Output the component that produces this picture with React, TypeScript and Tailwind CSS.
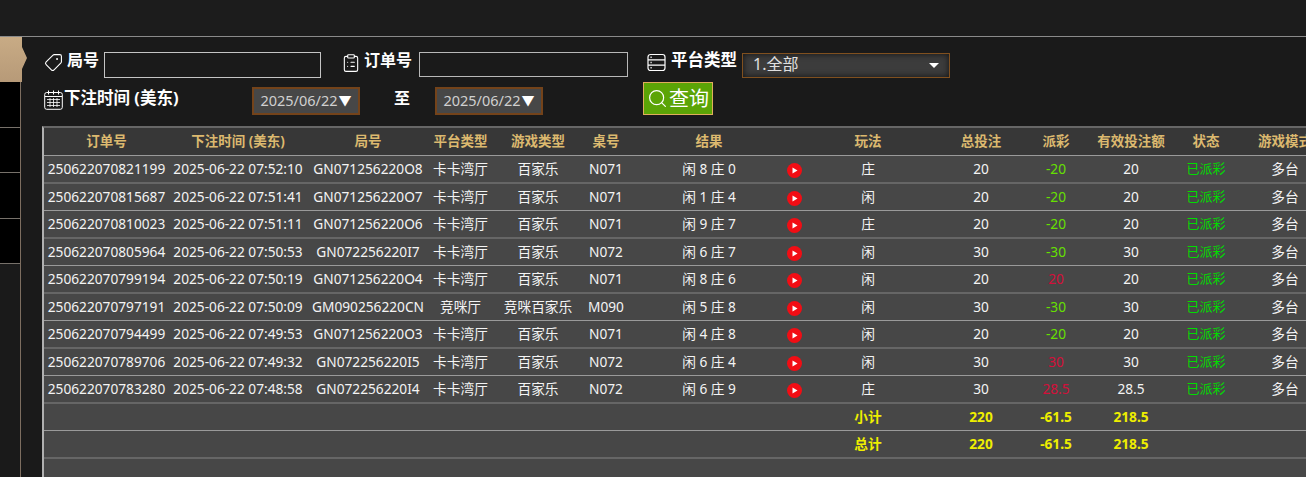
import { ClipboardList, Search, Tag } from "lucide-react";

const FONT = "font-['Noto_Sans','Noto_Sans_CJK_SC',sans-serif]";

const rows = [
  ["250622070821199", "2025-06-22 07:52:10", "GN071256220O8", "卡卡湾厅", "百家乐", "N071", "闲 8 庄 0", "庄", "20", "-20", "20"],
  ["250622070815687", "2025-06-22 07:51:41", "GN071256220O7", "卡卡湾厅", "百家乐", "N071", "闲 1 庄 4", "闲", "20", "-20", "20"],
  ["250622070810023", "2025-06-22 07:51:11", "GN071256220O6", "卡卡湾厅", "百家乐", "N071", "闲 9 庄 7", "庄", "20", "-20", "20"],
  ["250622070805964", "2025-06-22 07:50:53", "GN072256220I7", "卡卡湾厅", "百家乐", "N072", "闲 6 庄 7", "闲", "30", "-30", "30"],
  ["250622070799194", "2025-06-22 07:50:19", "GN071256220O4", "卡卡湾厅", "百家乐", "N071", "闲 8 庄 6", "闲", "20", "20", "20"],
  ["250622070797191", "2025-06-22 07:50:09", "GM090256220CN", "竞咪厅", "竞咪百家乐", "M090", "闲 5 庄 8", "闲", "30", "-30", "30"],
  ["250622070794499", "2025-06-22 07:49:53", "GN071256220O3", "卡卡湾厅", "百家乐", "N071", "闲 4 庄 8", "闲", "20", "-20", "20"],
  ["250622070789706", "2025-06-22 07:49:32", "GN072256220I5", "卡卡湾厅", "百家乐", "N072", "闲 6 庄 4", "闲", "30", "30", "30"],
  ["250622070783280", "2025-06-22 07:48:58", "GN072256220I4", "卡卡湾厅", "百家乐", "N072", "闲 6 庄 9", "庄", "30", "28.5", "28.5"],
];

const headers = ["订单号", "下注时间 (美东)", "局号", "平台类型", "游戏类型", "桌号", "结果", "", "玩法", "总投注", "派彩", "有效投注额", "状态", "游戏模式"];
const widths = [125, 138, 122, 63, 92, 44, 132, 68, 80, 111, 74, 76, 74, 84];

// row lines in the shot alternate: thin light, then thick dim
const lineThin = "border-b border-b-[#9a9a9a]";
const lineThick = "border-b-2 border-b-[#666666]";

function PlayIcon() {
  return (
    <svg width="15" height="15" viewBox="0 0 15 15" className="mx-auto mt-[3px] block">
      <circle cx="7.5" cy="7.5" r="7.5" fill="#f20d14" />
      <path d="M5.5 4.5 L10.5 7.5 L5.5 10.5 Z" fill="#ffffff" />
    </svg>
  );
}

function ServerIcon() {
  return (
    <svg width="19" height="19" viewBox="0 0 19 19" fill="none" stroke="white" strokeWidth="1.2" className="ml-[19px] mt-[1px] shrink-0">
      <rect x="1" y="1.5" width="17" height="16" rx="2.5" />
      <path d="M1 6.8H18M1 12.2H18" />
      <path d="M3.5 4.2H4.7M3.5 9.5H4.7M3.5 14.8H4.7" strokeWidth="1.4" />
    </svg>
  );
}

function CalendarIcon() {
  return (
    <svg width="19" height="20" viewBox="0 0 19 20" fill="none" stroke="white" strokeWidth="1" className="mt-[5px] shrink-0">
      <rect x="0.7" y="2.5" width="17.6" height="16.8" rx="2" />
      <path d="M4.5 0.5V4.5M9.5 0.5V4.5M14.5 0.5V4.5M1 6.5H18" />
      <path d="M3 9.5H16M3 12.5H16M3 15.5H16M6 8V17M9.5 8V17M13 8V17" strokeWidth="0.8" />
    </svg>
  );
}

function DateBox() {
  return (
    <div className="flex h-[28px] w-[108px] items-center justify-center border-2 border-[#74431a] bg-[#474747] text-[14.5px] text-[#d0d0d0]">
      2025/06/22<span className="ml-[1px] text-[13px] text-white">▼</span>
    </div>
  );
}

function Sidebar() {
  return (
    <div className="flex w-[21px] shrink-0 flex-col border-r border-r-[#7d6e60]">
      <div className="relative z-10 h-[45px] w-[27px] shrink-0 bg-gradient-to-b from-[#c8ab85] to-[#b79a78] [clip-path:polygon(0_0,22px_0,22px_10px,27px_21px,22px_32px,22px_100%,0_100%)]" />
      {[0, 1, 2, 3].map((i) => (
        <div key={i} className="h-[45.5px] shrink-0 border-b border-b-[#77716a] bg-black" />
      ))}
    </div>
  );
}

function Filters() {
  return (
    <div className="h-[89px] shrink-0 pl-[2px] text-white">
      <div className="flex h-[42px] pt-[15px]">
        <Tag size={19} strokeWidth={1.4} className="mt-[1px] w-[19px] shrink-0 -scale-x-100" />
        <span className="ml-[4px] mt-[-4px] text-[16px] font-bold">局号</span>
        <div className="ml-[5px] h-[26px] w-[217px] shrink-0 border border-[#c4c4c4]" />
        <ClipboardList size={20} strokeWidth={1.3} className="ml-[20px] mt-[1px] shrink-0" />
        <span className="ml-[3px] mt-[-4px] text-[16px] font-bold">订单号</span>
        <div className="ml-[7px] h-[25px] w-[209px] shrink-0 border border-[#b8b8b8]" />
        <ServerIcon />
        <span className="ml-[5px] mt-[-4px] text-[16.5px] font-bold">平台类型</span>
        <div className="ml-[5px] mt-[1px] flex h-[25px] w-[208px] shrink-0 items-center justify-between border border-[#80501f] bg-[#3c3c3c] pb-[3px] pl-[10px] pr-[10px] text-[16px] text-[#e0e0e0] shadow-[inset_0_0_6px_#111111]">
          1.全部
          <span className="mt-[3px] h-0 w-0 border-x-[5px] border-t-[5px] border-x-transparent border-t-white" />
        </div>
      </div>
      <div className="flex h-[47px] pt-[6px]">
        <CalendarIcon />
        <span className="ml-[1px] mt-[1px] w-[188px] text-[16.5px] font-bold">下注时间 (美东)</span>
        <div className="mt-[2px]"><DateBox /></div>
        <span className="ml-[34px] mt-[1px] w-[41px] text-[16px] font-bold">至</span>
        <div className="mt-[2px]"><DateBox /></div>
        <button className="ml-[100px] mt-[-3px] flex h-[33px] w-[70px] shrink-0 items-center justify-center border border-[#e0ad5c] bg-[#5ba406] text-[20px] leading-none text-white">
          <Search size={21} strokeWidth={1.4} className="mr-[1px]" />
          查询
        </button>
      </div>
    </div>
  );
}

function ReportTable() {
  const cell = "p-0 text-center whitespace-nowrap overflow-visible";
  return (
    <div className="min-h-0 flex-1 overflow-hidden border-l-2 border-t-2 border-l-[#b0b0b0] border-t-[#666666] bg-[#474747]">
      <table className="w-[1283px] table-fixed border-separate border-spacing-0 text-[13.7px] text-[#f4f4f4]">
        <colgroup>
          {widths.map((w, i) => (
            <col key={i} style={{ width: w }} />
          ))}
        </colgroup>
        <thead>
          <tr className="h-[28px]">
            {headers.map((h, i) => (
              <th
                key={i}
                className={`${cell} ${lineThin} bg-[#373737] text-[13.5px] font-bold text-[#dcb96f] ${i === 6 ? "pl-[30px]" : ""} ${i === 9 ? "pl-[35px]" : ""}`}
              >
                {h}
              </th>
            ))}
          </tr>
        </thead>
        <tbody>
          {rows.map((r, idx) => {
            const line = idx % 2 === 0 ? lineThick : lineThin;
            const h = idx % 2 === 0 ? "h-[28px]" : "h-[27px]";
            const loss = r[9].startsWith("-");
            return (
              <tr key={r[0]} className={h}>
                {r.slice(0, 6).map((v, i) => (
                  <td key={i} className={`${cell} ${line}`}>{v}</td>
                ))}
                <td className={`${cell} ${line} pl-[30px]`}>{r[6]}</td>
                <td className={`${cell} ${line}`}><PlayIcon /></td>
                <td className={`${cell} ${line}`}>{r[7]}</td>
                <td className={`${cell} ${line} pl-[35px]`}>{r[8]}</td>
                <td className={`${cell} ${line} ${loss ? "text-[#66e000]" : "text-[#d40f3a]"}`}>{r[9]}</td>
                <td className={`${cell} ${line}`}>{r[10]}</td>
                <td className={`${cell} ${line} text-[13px] text-[#00dd00]`}>已派彩</td>
                <td className={`${cell} ${line}`}>多台</td>
              </tr>
            );
          })}
          {["小计", "总计"].map((label, idx) => {
            const line = idx === 0 ? lineThin : lineThick;
            return (
              <tr key={label} className={`${idx === 0 ? "h-[27px]" : "h-[28px]"} font-bold text-[#eeee00]`}>
                <td colSpan={8} className={line} />
                <td className={`${cell} ${line}`}>{label}</td>
                <td className={`${cell} ${line} pl-[35px]`}>220</td>
                <td className={`${cell} ${line}`}>-61.5</td>
                <td className={`${cell} ${line}`}>218.5</td>
                <td colSpan={2} className={line} />
              </tr>
            );
          })}
        </tbody>
      </table>
    </div>
  );
}

export default function App() {
  return (
    <div className={`${FONT} flex h-[477px] w-[1306px] flex-col overflow-hidden bg-[#1a1a1a]`}>
      <div className="h-[37px] shrink-0 border-b border-b-[#8a8a8a] bg-[#1c1c1c]" />
      <div className="flex min-h-0 flex-1">
        <Sidebar />
        <div className="flex min-w-0 flex-1 flex-col pl-[21px]">
          <Filters />
          <ReportTable />
        </div>
      </div>
    </div>
  );
}
